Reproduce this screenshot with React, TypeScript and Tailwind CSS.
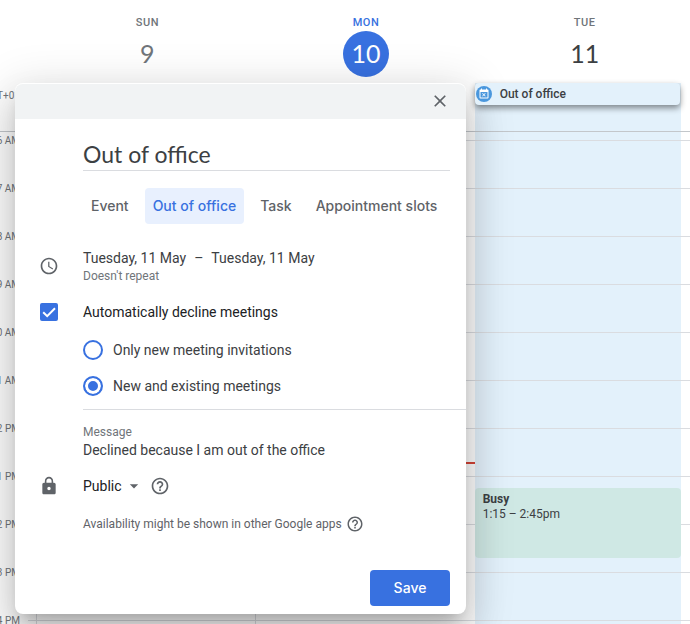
import { useState } from 'react';
import { MdAccessTime, MdArrowDropDown, MdClose, MdEventBusy, MdHelpOutline, MdLock } from 'react-icons/md';

const DAYS = [
  { name: 'SUN', date: 9, label: 'text-[#70757a]', number: 'text-[#70757a]' },
  { name: 'MON', date: 10, label: 'text-[#3871e0]', number: 'bg-[#3871e0] text-white' },
  { name: 'TUE', date: 11, label: 'text-[#70757a]', number: 'text-[#3c4043]' },
];

const HOURS = ['6 AM', '7 AM', '8 AM', '9 AM', '10 AM', '11 AM', '12 PM', '1 PM', '2 PM', '3 PM', '4 PM'];

const TABS = ['Event', 'Out of office', 'Task', 'Appointment slots'];

function DayHeader() {
  return (
    <div className="grid grid-cols-[38px_repeat(3,1fr)] h-[83px] pt-4">
      <div />
      {DAYS.map((day) => (
        <div key={day.name} className="flex flex-col items-center">
          <span className={`text-[11px] leading-[14px] font-medium tracking-wider ${day.label}`}>{day.name}</span>
          <span className={`mt-px w-[46px] h-[46px] rounded-full flex items-center justify-center font-[Lato] text-[25px] ${day.number}`}>
            {day.date}
          </span>
        </div>
      ))}
    </div>
  );
}

function AllDayRow() {
  return (
    <div className="grid grid-cols-[36px_repeat(3,1fr)] h-[49px] border-b border-[#c3c7cb]">
      <div className="flex justify-end pr-4 pt-1.5 text-[10px] leading-[14px] text-[#70757a]">GMT+01</div>
      <div />
      <div />
      <div className="mr-[13px] bg-[#e3f1fb]">
        <div className="relative z-20 mr-px h-[22px] flex items-center gap-2 rounded-sm bg-[#e3f1fb] pl-px shadow-[0_3px_6px_rgba(0,0,0,0.45)]">
          <span className="w-4 h-4 rounded-full bg-[#4a97dd] flex items-center justify-center">
            <MdEventBusy className="w-3 h-3 text-white" />
          </span>
          <span className="text-xs font-medium text-[#3c4043]">Out of office</span>
        </div>
      </div>
    </div>
  );
}

function HourGrid() {
  return (
    <div className="relative">
      <div className="grid grid-cols-[36px_repeat(3,1fr)]">
        <div />
        <div className="border-l border-[#dadce0]" />
        <div className="border-l border-[#dadce0]" />
        <div className="mr-[13px] h-[492px] bg-[#e3f1fb]" />
      </div>

      <div className="absolute inset-x-0 top-0 pt-2">
        {HOURS.map((hour) => (
          <div key={hour} className="flex h-12">
            <div className="-mt-1.5 w-7 shrink-0 flex justify-end pr-2 text-[10px] leading-[14px] whitespace-nowrap text-[#70757a]">
              {hour}
            </div>
            <div className="flex-1 border-t border-[#dadce0]" />
          </div>
        ))}
      </div>

      {/* current time and events */}
      <div className="absolute inset-0 grid grid-cols-[36px_repeat(3,1fr)]">
        <div />
        <div />
        <div className="mt-[330px] h-0.5 bg-[#d64537]" />
        <div className="mr-[13px] mt-[356px] h-[70px] rounded bg-[#cfe8e4] px-2 py-1 text-xs leading-[15px] text-[#3c4043]">
          <div className="font-bold">Busy</div>
          <div>1:15 – 2:45pm</div>
        </div>
      </div>
    </div>
  );
}

function EventDialog() {
  const [title, setTitle] = useState('Out of office');
  const [tab, setTab] = useState('Out of office');
  const [decline, setDecline] = useState(true);
  const [scope, setScope] = useState('all');

  const radioClass =
    'appearance-none w-5 h-5 rounded-full border-2 border-[#3871e0] checked:bg-[#3871e0] checked:shadow-[inset_0_0_0_3px_white]';

  return (
    <div
      role="dialog"
      aria-label="Create event"
      className="absolute left-[15px] top-[83px] z-10 w-[451px] rounded-lg bg-white pt-px pb-2 overflow-hidden text-sm leading-5 text-[#3c4043] shadow-[0_24px_38px_3px_rgba(0,0,0,0.14),0_9px_46px_8px_rgba(0,0,0,0.12),0_11px_15px_-7px_rgba(0,0,0,0.2)]"
    >
      <div className="flex h-[35px] items-start justify-end rounded-t-lg bg-[#f1f3f4] pr-4 pt-[7px]">
        <button type="button" aria-label="Close">
          <MdClose className="w-5 h-5 text-[#5f6368]" />
        </button>
      </div>

      <form className="grid grid-cols-[68px_1fr]" onSubmit={(e) => e.preventDefault()}>
        <input
          aria-label="Title"
          value={title}
          onChange={(e) => setTitle(e.target.value)}
          className="col-start-2 mt-5 mr-4 h-8 min-w-0 border-b border-[#dadce0] pb-0.5 font-[Lato] text-[23px] outline-none"
        />

        <div role="tablist" className="col-start-2 mt-[17px] flex gap-2">
          {TABS.map((name) => (
            <button
              key={name}
              type="button"
              role="tab"
              aria-selected={tab === name}
              onClick={() => setTab(name)}
              className={`h-9 rounded px-2 font-[Inter] font-medium whitespace-nowrap ${tab === name ? 'bg-[#e8f0fe] text-[#3871e0]' : 'text-[#5f6368]'}`}
            >
              {name}
            </button>
          ))}
        </div>

        <MdAccessTime className="mt-8 ml-6 w-5 h-5 text-[#5f6368]" />
        <div className="mt-6">
          <div className="flex gap-2">
            <span>Tuesday, 11 May</span>
            <span>–</span>
            <span>Tuesday, 11 May</span>
          </div>
          <div className="text-xs leading-4 text-[#70757a]">Doesn't repeat</div>
        </div>

        <div className="mt-[18px] ml-[25px] h-5 flex items-center">
          <span className="relative w-[18px] h-[18px]">
            <input
              id="decline"
              type="checkbox"
              checked={decline}
              onChange={(e) => setDecline(e.target.checked)}
              className="block appearance-none w-full h-full rounded-xs border-2 border-[#3871e0] checked:bg-[#3871e0]"
            />
            {decline && (
              <svg viewBox="0 0 18 18" className="absolute inset-0 pointer-events-none" fill="none" stroke="white" strokeWidth="2">
                <path d="M3.2 9.2l4 4 7.8-8" />
              </svg>
            )}
          </span>
        </div>
        <label htmlFor="decline" className="mt-[18px] text-[#202124]">
          Automatically decline meetings
        </label>

        <div className="col-start-2 mt-[18px] flex flex-col gap-4 border-b border-[#dadce0] pb-[13px]">
          <label className="flex items-center gap-2.5">
            <input type="radio" name="scope" checked={scope === 'new'} onChange={() => setScope('new')} className={radioClass} />
            Only new meeting invitations
          </label>
          <label className="flex items-center gap-2.5">
            <input type="radio" name="scope" checked={scope === 'all'} onChange={() => setScope('all')} className={radioClass} />
            New and existing meetings
          </label>
        </div>

        <div className="col-start-2 mt-3.5 mr-4 flex flex-col">
          <label htmlFor="message" className="text-xs leading-4 text-[#70757a]">
            Message
          </label>
          <input id="message" defaultValue="Declined because I am out of the office" className="h-5 outline-none" />
        </div>

        <MdLock className="mt-4 ml-6 w-5 h-5 text-[#5f6368]" />
        <div className="mt-4 flex h-5 items-center">
          <div className="relative">
            <select aria-label="Visibility" className="block w-[61px] appearance-none text-[#202124] outline-none">
              <option>Public</option>
              <option>Private</option>
            </select>
            <MdArrowDropDown className="absolute right-0 top-0 w-5 h-5 text-[#5f6368] pointer-events-none" />
          </div>
          <button type="button" aria-label="Visibility help" className="ml-1.5">
            <MdHelpOutline className="w-5 h-5 text-[#5f6368]" />
          </button>
        </div>

        <div className="col-start-2 mt-[18px] flex items-center gap-1 text-xs leading-5 text-[#5f6368]">
          Availability might be shown in other Google apps
          <button type="button" aria-label="Availability help">
            <MdHelpOutline className="w-[18px] h-[18px]" />
          </button>
        </div>

        <button type="submit" className="col-start-2 mt-9 mr-4 h-9 w-20 justify-self-end rounded bg-[#3871e0] font-[Inter] font-medium text-white">
          Save
        </button>
      </form>
    </div>
  );
}

export default function App() {
  return (
    <div className="relative overflow-hidden bg-white font-[Roboto,sans-serif]">
      <div className="-mr-1">
        <DayHeader />
        <AllDayRow />
        <HourGrid />
      </div>
      <EventDialog />
    </div>
  );
}
